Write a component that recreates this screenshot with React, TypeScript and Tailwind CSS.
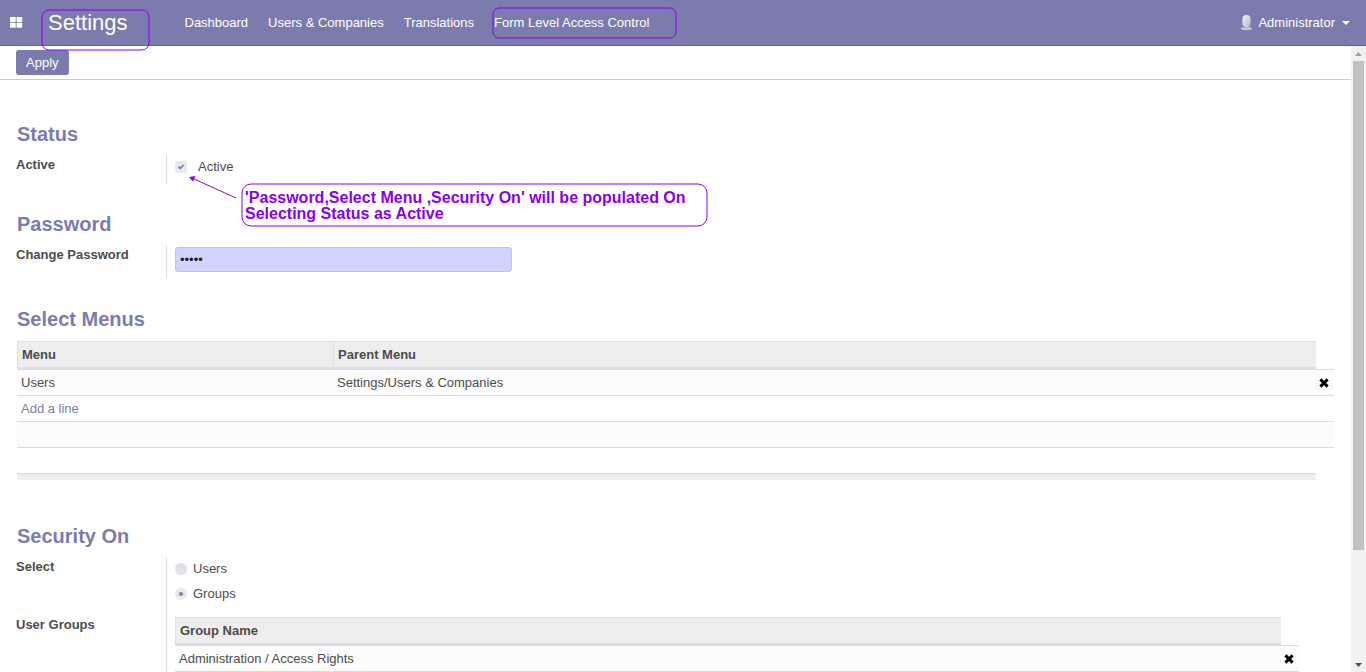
import React from "react";

const navLinks = ["Dashboard", "Users & Companies", "Translations", "Form Level Access Control"];

function AppsIcon() {
  return (
    <svg width="13" height="11" viewBox="0 0 13 11" fill="#fff" aria-hidden="true">
      <rect x="0" y="0" width="5.7" height="5" rx="0.7" />
      <rect x="6.5" y="0" width="5.7" height="5" rx="0.7" />
      <rect x="0" y="5.7" width="5.7" height="5" rx="0.7" />
      <rect x="6.5" y="5.7" width="5.7" height="5" rx="0.7" />
    </svg>
  );
}

function AvatarIcon() {
  return (
    <svg width="13" height="16" viewBox="0 0 13 16" aria-hidden="true">
      <defs>
        <linearGradient id="avatar" x1="0" y1="0" x2="1" y2="1">
          <stop offset="0" stopColor="#f4f5f5" />
          <stop offset="1" stopColor="#b4b8bd" />
        </linearGradient>
      </defs>
      <ellipse cx="6.5" cy="13.6" rx="5.6" ry="1.7" fill="#c8cccf" />
      <rect x="4.5" y="10" width="4" height="4" fill="#b9bdc0" />
      <rect x="2.4" y="0" width="8.2" height="12" rx="4" fill="url(#avatar)" />
    </svg>
  );
}

function RemoveButton({ label }: { label: string }) {
  return (
    <button type="button" aria-label={label} className="flex h-6 w-4 items-center justify-center">
      <svg width="10" height="10" viewBox="0 0 10 10" aria-hidden="true">
        <path d="M1.4 1.4 8.6 8.6M8.6 1.4 1.4 8.6" stroke="#000" strokeWidth="2.9" />
      </svg>
    </button>
  );
}

function Heading({ children }: { children: React.ReactNode }) {
  return <h2 className="pl-px text-[20px] leading-5 font-bold text-[#7c7bad]">{children}</h2>;
}

const label = "w-[150px] shrink-0 leading-5 font-bold";
const field = "min-w-0 flex-1 border-l border-[#dddddd] pl-2";
const th = "border-t border-l border-b-2 border-[#dee2e6] bg-[#eeeeee] px-1 text-left font-bold h-7";
const td = "h-[26px] border-t border-[#dddddd] px-1";
const table = "w-full table-fixed border-separate border-spacing-0";

export default function App() {
  return (
    <div
      className="relative flex h-screen flex-col overflow-hidden bg-white text-[13px] text-[#4c4c4c]"
      style={{ fontFamily: '"Liberation Sans", Arial, sans-serif' }}
    >
      <header className="flex h-[46px] shrink-0 items-center border-b border-[#5f5e97] bg-[#7c7bad] pr-4 pl-[10px] text-white">
        <button type="button" aria-label="Applications" className="mr-[25px]">
          <AppsIcon />
        </button>
        <a href="#settings" className="mr-[57px] text-[22px] leading-6">
          Settings
        </a>
        <nav className="flex gap-5">
          {navLinks.map((name) => (
            <a key={name} href="#menu">
              {name}
            </a>
          ))}
        </nav>
        <button type="button" className="ml-auto flex items-center">
          <AvatarIcon />
          <span className="mr-[7px] ml-[5px]">Administrator</span>
          <svg width="8" height="4" viewBox="0 0 8 4" fill="#fff" aria-hidden="true">
            <path d="M0 0h8L4 4z" />
          </svg>
        </button>
      </header>

      <div className="flex min-h-0 flex-1">
        <main className="min-w-0 flex-1 overflow-hidden">
          <div className="border-b border-[#cccccf] px-4 py-1">
            <button type="button" className="block h-[25px] rounded-[3px] bg-[#7c7bad] px-[10px] text-white">
              Apply
            </button>
          </div>

          <div className="px-4 pt-11">
            <section className="mb-[30px]">
              <Heading>Status</Heading>
              <div className="mt-[11px] flex">
                <div className={label}>Active</div>
                <div className={`${field} h-[29px]`}>
                  <label className="flex h-6 items-center">
                    <span className="relative flex h-3 w-3">
                      <input type="checkbox" defaultChecked className="h-3 w-3 appearance-none rounded-[2px] bg-[#e6e9ed]" />
                      <svg className="pointer-events-none absolute inset-0" width="12" height="12" viewBox="0 0 12 12" aria-hidden="true">
                        <path d="M3.4 5.7 5.2 7.4 8.7 4" fill="none" stroke="#7c7bad" strokeWidth="1.7" />
                      </svg>
                    </span>
                    <span className="ml-[11px]">Active</span>
                  </label>
                </div>
              </div>
            </section>

            <section className="mb-[30px]">
              <Heading>Password</Heading>
              <div className="mt-[11px] flex">
                <label htmlFor="password" className={label}>
                  Change Password
                </label>
                <div className={`${field} h-[34px] pt-[2px]`}>
                  <input
                    id="password"
                    type="password"
                    defaultValue="admin"
                    className="block h-[25px] w-[337px] rounded-[3px] border border-[#c4c4cc] bg-[#d2d2ff] px-1 text-[#1f1f1f] outline-none"
                  />
                </div>
              </div>
            </section>

            <section className="mb-[46px]">
              <Heading>Select Menus</Heading>
              <div className="mx-px mt-3">
                <table className={table}>
                  <colgroup>
                    <col className="w-[316px]" />
                    <col />
                    <col className="w-[18px]" />
                  </colgroup>
                  <thead>
                    <tr>
                      <th className={th}>Menu</th>
                      <th className={th}>Parent Menu</th>
                      <td />
                    </tr>
                  </thead>
                  <tbody>
                    <tr className="bg-[#fcfcfc]">
                      <td className={td}>Users</td>
                      <td className={td}>Settings/Users &amp; Companies</td>
                      <td className="border-t border-[#dddddd]">
                        <RemoveButton label="Remove Users" />
                      </td>
                    </tr>
                    <tr>
                      <td colSpan={3} className={td}>
                        <a href="#add" className="text-[#7c7bad]">
                          Add a line
                        </a>
                      </td>
                    </tr>
                    <tr className="bg-[#fcfcfc]">
                      <td colSpan={3} className={td} />
                    </tr>
                    <tr>
                      <td colSpan={3} className={td} />
                    </tr>
                  </tbody>
                  <tfoot>
                    <tr>
                      <td colSpan={2} className="h-[7px] border-t border-[#dddddd] bg-[#eeeeee]" />
                      <td />
                    </tr>
                  </tfoot>
                </table>
              </div>
            </section>

            <section>
              <Heading>Security On</Heading>
              <div className="mt-[11px] flex">
                <div className={label}>Select</div>
                <div className={`${field} flex h-[58px] flex-col gap-px`}>
                  <label className="flex h-6 items-center gap-[6px]">
                    <input type="radio" name="security" className="h-3 w-3 appearance-none rounded-full bg-[#dee1e6]" />
                    Users
                  </label>
                  <label className="flex h-6 items-center gap-[6px]">
                    <input
                      type="radio"
                      name="security"
                      defaultChecked
                      className="h-3 w-3 appearance-none rounded-full border-4 border-[#e6e9ed] bg-[#7c7bad]"
                    />
                    Groups
                  </label>
                </div>
              </div>
              <div className="flex">
                <div className={label}>User Groups</div>
                <div className={`${field} pt-[2px] pr-9`}>
                  <table className={table}>
                    <colgroup>
                      <col />
                      <col className="w-[18px]" />
                    </colgroup>
                    <thead>
                      <tr>
                        <th className={th}>Group Name</th>
                        <td />
                      </tr>
                    </thead>
                    <tbody>
                      <tr className="bg-[#fcfcfc]">
                        <td className={td}>Administration / Access Rights</td>
                        <td className="border-t border-[#dddddd]">
                          <RemoveButton label="Remove Administration / Access Rights" />
                        </td>
                      </tr>
                      <tr>
                        <td colSpan={2} className={td} />
                      </tr>
                    </tbody>
                  </table>
                </div>
              </div>
            </section>
          </div>
        </main>

        <div aria-hidden="true" className="flex w-[15px] shrink-0 flex-col items-center bg-[#f1f1f1]">
          <div className="flex h-[15px] shrink-0 items-center">
            <svg width="7" height="4" viewBox="0 0 7 4" fill="#a3a3a3">
              <path d="M0 4h7L3.5 0z" />
            </svg>
          </div>
          <div className="min-h-0 w-[11px] flex-1">
            <div className="h-[82%] bg-[#c1c1c1]" />
          </div>
          <div className="flex h-[15px] shrink-0 items-center">
            <svg width="7" height="4" viewBox="0 0 7 4" fill="#505050">
              <path d="M0 0h7L3.5 4z" />
            </svg>
          </div>
        </div>
      </div>

      <svg
        aria-hidden="true"
        className="pointer-events-none absolute top-0 left-0"
        width="720"
        height="240"
        viewBox="0 0 720 240"
        fill="none"
        stroke="#8800f0"
      >
        <rect x="42" y="10" width="107" height="40" rx="7" />
        <rect x="493" y="8" width="183" height="30" rx="6" />
        <rect x="242" y="184" width="465" height="42" rx="9" />
        <path d="M236 198 193 178.500" />
        <path d="M189 177 195.500 176 192.800 181.500z" fill="#8800f0" stroke="none" />
      </svg>
      <p className="pointer-events-none absolute top-[190px] left-[245px] w-[460px] text-[16px] leading-4 font-bold text-[#8800f0]">
        'Password,Select Menu ,Security On' will be populated On Selecting Status as Active
      </p>
    </div>
  );
}
